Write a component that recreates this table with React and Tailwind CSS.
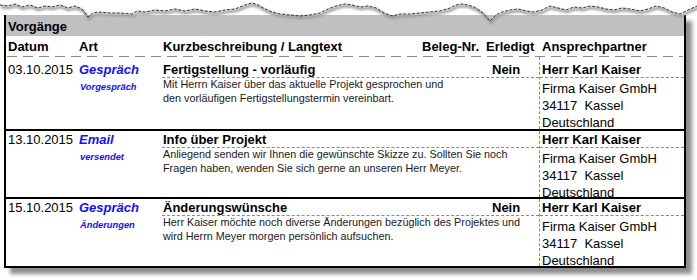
import React from "react";

const vorgaenge = [
  {
    datum: "03.10.2015",
    art: "Gespräch",
    zusatz: "Vorgespräch",
    titel: "Fertigstellung - vorläufig",
    erledigt: "Nein",
    text: [
      "Mit Herrn Kaiser über das aktuelle Projekt gesprochen und",
      "den vorläufigen Fertigstellungstermin vereinbart.",
    ],
  },
  {
    datum: "13.10.2015",
    art: "Email",
    zusatz: "versendet",
    titel: "Info über Projekt",
    erledigt: "",
    text: [
      "Anliegend senden wir Ihnen die gewünschte Skizze zu. Sollten Sie noch",
      "Fragen haben, wenden Sie sich gerne an unseren Herr Meyer.",
    ],
  },
  {
    datum: "15.10.2015",
    art: "Gespräch",
    zusatz: "Änderungen",
    titel: "Änderungswünsche",
    erledigt: "Nein",
    text: [
      "Herr Kaiser möchte noch diverse Änderungen bezüglich des Projektes und",
      "wird Herrn Meyer morgen persönlich aufsuchen.",
    ],
  },
];

// Abriss-Kante oben (x,y)
const riss = [
  [0, 5], [8, 6], [15, 4], [22, 7], [30, 5], [38, 8], [45, 6], [52, 7], [60, 5], [68, 8],
  [75, 6], [82, 9], [88, 17], [93, 13], [98, 12], [110, 13], [120, 13], [132, 14], [137, 11],
  [145, 12], [155, 10], [165, 11], [175, 9], [185, 11], [195, 9], [205, 11], [215, 12],
  [225, 10], [235, 9], [245, 5], [252, 3], [258, 5], [265, 9], [272, 12], [280, 14], [290, 15],
  [300, 16], [310, 15], [320, 13], [328, 9], [336, 6], [345, 4], [352, 5], [360, 7], [368, 6],
  [376, 8], [384, 13], [392, 16], [400, 14], [410, 14], [420, 13], [430, 12], [440, 11],
  [450, 8], [456, 5], [462, 4], [468, 5], [474, 7], [482, 12], [490, 21], [496, 15], [502, 12],
  [510, 10], [518, 9], [526, 11], [534, 12], [542, 10], [550, 6], [558, 8], [566, 10],
  [574, 7], [582, 8], [590, 6], [598, 7], [606, 9], [614, 10], [622, 8], [630, 9], [640, 11],
  [648, 9], [656, 6], [664, 8], [672, 12], [680, 14], [688, 10], [697, 6],
];

const RissKante = () => {
  const pts = riss.map(([x, y]) => `${x},${y}`).join(" ");
  return (
    <svg
      className="absolute left-0 top-0"
      width="697"
      height="26"
      viewBox="0 0 697 26"
    >
      <defs>
        <filter id="weich" x="-5%" y="-50%" width="110%" height="200%">
          <feGaussianBlur stdDeviation="1.2" />
        </filter>
      </defs>
      <polyline
        points={pts}
        fill="none"
        stroke="#9a9a9a"
        strokeWidth="2.5"
        transform="translate(1 2)"
        filter="url(#weich)"
      />
      <polyline
        points={pts}
        fill="none"
        stroke="#222"
        strokeWidth="0.9"
        strokeDasharray="3 1.5"
      />
    </svg>
  );
};

const Zeile = ({ v, erste, letzte }) => (
  <div
    className={
      "flex " +
      (erste ? "h-[74px] " : letzte ? "h-[67px] " : "h-[68px] ") +
      (letzte ? "" : "border-b-2 border-black")
    }
  >
    <div className={"w-[72px] pl-[2px] " + (erste ? "pt-[5px]" : "pt-px")}>
      <div className="text-[13px] leading-[15px] text-black">{v.datum}</div>
    </div>
    <div className={"w-[84px] pl-px " + (erste ? "pt-[5px]" : "pt-px")}>
      <div className="text-[13px] leading-[15px] font-bold italic text-[#1010ff]">
        {v.art}
      </div>
      <div className="mt-[4px] pl-px text-[9.3px] leading-[12px] font-bold italic text-[#1010ff]">
        {v.zusatz}
      </div>
    </div>
    <div className={"w-[377px] " + (erste ? "pt-[5px]" : "pt-px")}>
      <div className="flex h-[16px] border-b border-dashed border-[#8a8a8a] text-[13px] leading-[15px] font-bold text-black">
        <div className="w-[260px] pl-px">{v.titel}</div>
        <div className="w-[64px]"></div>
        <div className="w-[53px] pl-[6px]">{v.erledigt}</div>
      </div>
      <div className="pl-px text-[10.8px] leading-[13.5px] text-[#1a1a1a] whitespace-nowrap">
        {v.text.map((t) => (
          <div key={t}>{t}</div>
        ))}
      </div>
    </div>
    <div className="w-[145px] border-l border-dashed border-[#8a8a8a]">
      <div className={erste ? "pt-[5px]" : "pt-px"}>
        <div className="h-[16px] border-b border-dashed border-[#8a8a8a] pl-[2px] text-[13px] leading-[15px] font-bold text-black">
          Herr Karl Kaiser
        </div>
        <div className="pt-[2px] pl-[2px] text-[13px] leading-[17px] text-black whitespace-nowrap">
          <div>Firma Kaiser GmbH</div>
          <div>34117&nbsp;&nbsp;Kassel</div>
          <div>Deutschland</div>
        </div>
      </div>
    </div>
  </div>
);

export default function App() {
  return (
    <div
      className="relative w-[697px] h-[280px] bg-white overflow-hidden"
      style={{ fontFamily: '"Liberation Sans", Arial, sans-serif' }}
    >
      <div className="pt-[15px] pl-[4px]">
        <div className="w-[682px] border-x-2 border-b-2 border-black bg-white shadow-[6px_6px_4px_rgba(0,0,0,0.45)]">
          <div className="h-[21px] bg-[#c0c0c0] pl-[2px] text-[13px] leading-[23px] font-bold text-black">
            Vorgänge
          </div>

          <div className="h-[21px]">
            <div className="flex h-[20px] text-[13px] leading-[22px] font-bold text-black">
              <div className="w-[72px] pl-[2px]">Datum</div>
              <div className="w-[84px] pl-px">Art</div>
              <div className="flex w-[377px]">
                <div className="w-[260px] pl-px">Kurzbeschreibung / Langtext</div>
                <div className="w-[64px]">Beleg-Nr.</div>
                <div className="w-[53px]">Erledigt</div>
              </div>
              <div className="w-[145px] pl-[3px]">Ansprechpartner</div>
            </div>
            <div className="mx-px h-px bg-[repeating-linear-gradient(90deg,#8c8c8c_0_10px,transparent_10px_16px)]"></div>
          </div>

          {vorgaenge.map((v, i) => (
            <Zeile
              key={v.datum}
              v={v}
              erste={i === 0}
              letzte={i === vorgaenge.length - 1}
            />
          ))}
        </div>
      </div>
      <RissKante />
    </div>
  );
}
